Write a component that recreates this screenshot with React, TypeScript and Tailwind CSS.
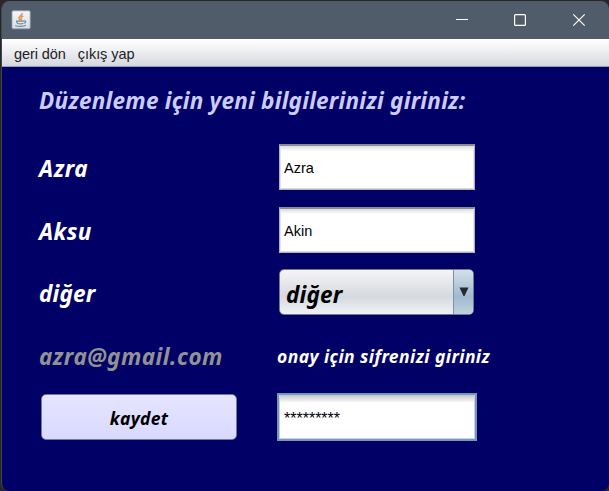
import React from 'react';

const label = "whitespace-nowrap font-['Noto_Sans',sans-serif] font-bold italic";

function JavaIcon() {
  return (
    <svg width="20" height="20" viewBox="0 0 20 20">
      <defs>
        <linearGradient id="tile" x1="0" y1="0" x2="0" y2="1">
          <stop offset="0" stopColor="#f4f6f8" />
          <stop offset="1" stopColor="#d9dde2" />
        </linearGradient>
      </defs>
      <rect x="1" y="0.8" width="18.2" height="18" rx="1.2" fill="url(#tile)" stroke="#86a3b8" strokeWidth="0.8" />
      <path d="M11.2 3.2c.4 2-3.400 2.900-3.200 4.900.1 1 1 1.600 1.500 2.500M12.300 6c-1.700.7-2.600 1.500-2.100 2.600.4.700.5 1.100-.2 1.900" fill="none" stroke="#ec9150" strokeWidth="1.600" />
      <path d="M5 11.200h8M6.200 13.200c2 .7 4.500.7 6.300 0M5.500 11.600c.3 1 .6 1.300 1.300 1.700M13 11c2.100-.5 2.400 1.600.1 2.200M4.200 15.500c2.600 1.300 8.500 1.200 10.800-.2" fill="none" stroke="#6f8ca3" strokeWidth="1.200" />
    </svg>
  );
}

function TitleBar() {
  return (
    <header className="flex h-[38px] shrink-0 justify-between bg-[#515c6a]">
      <div className="pt-[9px] pl-[9px]"><JavaIcon /></div>
      <svg width="160" height="38" viewBox="449 1 160 38" fill="none" stroke="#fff">
        <path d="M456 19.500h12" />
        <rect x="514.600" y="14.600" width="10.800" height="10.800" rx="1" strokeWidth="1.200" />
        <path d="M573.300 14.300l11.400 11.400M584.700 14.300l-11.400 11.400" strokeWidth="1.150" />
      </svg>
    </header>
  );
}

function TextField({ value }: { value: string }) {
  return (
    <div className="ml-px flex h-[46px] w-[196px] items-center border border-t-2 border-[#b3b3be] border-t-[#8b8b92] bg-white bg-linear-to-b from-[#dcdcdc] via-white via-[12%] to-white pl-[4px] shadow-[inset_1px_0_#e5e5e8,inset_-1px_0_#e5e5e8,inset_0_-1px_#dadade] font-['Liberation_Sans',sans-serif] text-[14.500px] text-black">
      <span className="pt-[3px]">{value}</span>
    </div>
  );
}

export default function App() {
  return (
    <div className="h-[491px] w-[609px] overflow-hidden bg-[#272727] pt-px pl-px">
      <main className="flex h-[490px] flex-col overflow-hidden rounded-[8px] border-l border-[#41464e] bg-[#000066]">
        <TitleBar />
        <nav className="flex h-[28px] shrink-0 items-center gap-[12px] border-b border-[#98a0ae] bg-linear-to-b from-white via-[#eeeff2] via-[45%] to-[#d5d8de] pt-[4px] pl-[12px] font-['Liberation_Sans',sans-serif] text-[14.500px] tracking-[-0.070px] text-[#202124]">
          <span>geri dön</span><span>çıkış yap</span>
        </nav>
        <section className="flex flex-col pl-[37px]">
          <h1 className={`${label} mt-[16px] h-[34px] text-[22.500px] leading-[35px] tracking-[0.220px] text-[#ccccff]`}>Düzenleme için yeni bilgilerinizi giriniz:</h1>
          <div className="mt-[27px] grid auto-rows-[46px] grid-cols-[239px_auto] gap-y-[16.500px] text-white">
            <div className={`${label} text-[22.500px] leading-[50px] tracking-[0.500px]`}>Azra</div>
            <TextField value="Azra" />
            <div className={`${label} text-[22.500px] leading-[50px] tracking-[0.400px]`}>Aksu</div>
            <TextField value="Akin" />
            <div className={`${label} text-[22.500px] leading-[50px] tracking-[0.200px]`}>diğer</div>
            <div className="ml-px flex h-[46px] w-[195px] overflow-hidden rounded-[5px] border border-[#747887] bg-linear-to-b from-[#f5f5f8] via-[#d6d9df] via-[60%] to-[#f0f2f6] text-black">
              <span className={`${label} flex-1 pl-[6px] text-[22.500px] leading-[49px] tracking-[0.200px]`}>diğer</span>
              <span className="flex w-[20px] justify-center border-l border-[#7894aa] bg-linear-to-b from-[#d4e0ea] via-[#a1b9cf] via-[60%] to-[#bfd3de] pt-[17px]">
                <svg width="10" height="10" viewBox="0 0 10 10"><path d="M0.500 0.500h9L5.500 9h-1z" fill="#252a30" /></svg>
              </span>
            </div>
            <div className={`${label} text-[22.500px] leading-[50px] tracking-[0.500px] text-[#929292]`}>azra@gmail.com</div>
            <div className={`${label} -ml-px text-[17.500px] leading-[48px] tracking-[0.420px]`}>onay için sifrenizi giriniz</div>
            <button className={`${label} ml-[2px] h-[46px] w-[196px] rounded-[5px] border border-[#777997] bg-linear-to-b from-[#e5e5ff] to-[#d9d9ff] pt-[3px] text-[17.500px] tracking-[0.300px] text-black`}>kaydet</button>
            <div className="-mt-px -ml-px flex h-[48px] w-[200px] items-center border-2 border-[#7398bf] bg-linear-to-b from-[#c5c5c8] via-white via-[18%] to-white pl-[5px] shadow-[inset_1px_0_#d0d0d5,inset_-1px_0_#d0d0d5,inset_0_-1px_#d0d0d5] font-['Liberation_Sans',sans-serif] text-[16px] text-black">
              <span className="pt-[4px]">*********</span>
            </div>
          </div>
        </section>
      </main>
    </div>
  );
}
